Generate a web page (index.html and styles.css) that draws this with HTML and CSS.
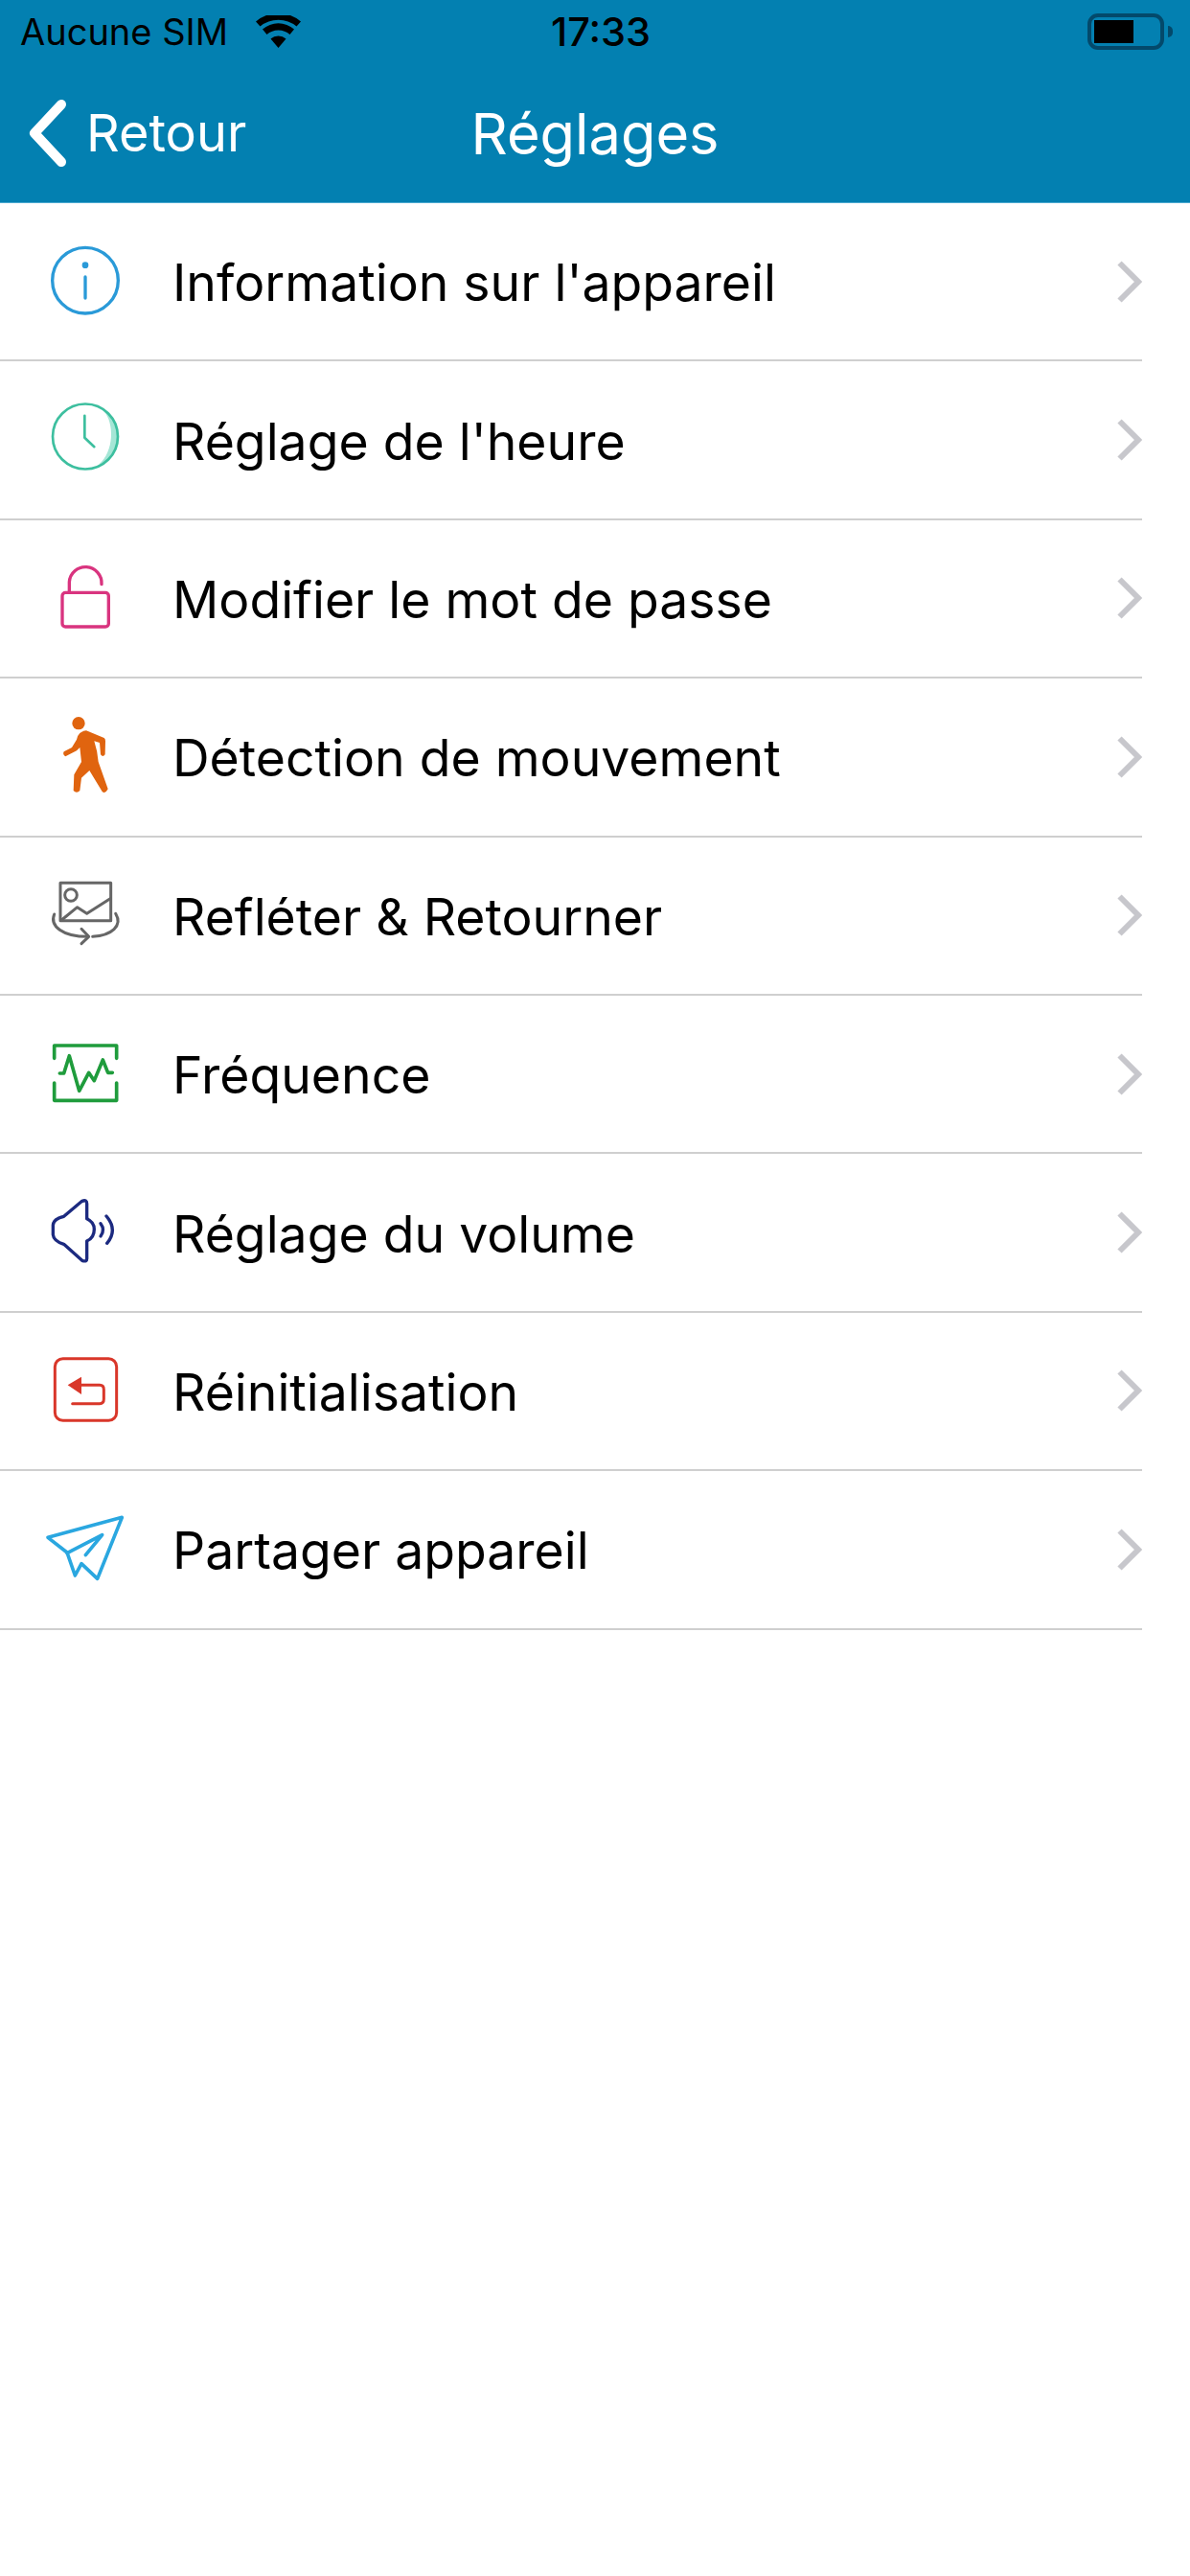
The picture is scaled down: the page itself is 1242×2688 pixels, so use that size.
FILE: index.html
```html
<!DOCTYPE html>
<html lang="fr">
<head>
    <meta charset="UTF-8">
    <meta name="viewport" content="width=device-width, initial-scale=1.0">
    <title>Réglages</title>
    <link rel="stylesheet" href="styles.css">
</head>
<body>

    <header class="top">
        <div class="status">
            <div class="status-left">
                <span>Aucune SIM</span>
                <svg class="wifi" viewBox="0 0 47 34">
                    <path d="M23.500 34 15.500 24.500a12 12 0 0 1 16 0Z"/>
                    <path d="M11.500 20 7 14.500a25 25 0 0 1 33 0L35.500 20a18 18 0 0 0-24 0Z"/>
                    <path d="M4.500 11.500 0 6.500a36 36 0 0 1 47 0L42.500 11.500a30 30 0 0 0-38 0Z"/>
                </svg>
            </div>
            <span class="clock">17:33</span>
            <div class="status-right">
                <div class="battery"><div class="battery-level"></div></div>
                <div class="battery-nub"></div>
            </div>
        </div>
        <nav class="nav">
            <div class="back">
                <svg class="back-icon" viewBox="0 0 40 70"><path d="M34 5 6 35l28 30"/></svg>
                <span>Retour</span>
            </div>
            <h1>Réglages</h1>
            <div></div>
        </nav>
    </header>

    <ul class="list">
        <li class="row">
            <svg class="icon" viewBox="42 27 270 270" fill="none" stroke="#2a9ad8" stroke-width="10" stroke-linecap="round">
                <circle cx="177" cy="158" r="103"/>
                <circle cx="177" cy="110" r="10" fill="#2a9ad8" stroke="none"/>
                <path d="M177 147v66"/>
            </svg>
            <span class="label">Information sur l'appareil</span>
            <svg class="chevron" viewBox="0 0 26 44"><path d="M2.500 2.500 22 22 2.500 41.500"/></svg>
        </li>
        <li class="row">
            <svg class="icon" viewBox="42 43.500 270 270" fill="none" stroke="#3dbf9f" stroke-width="8" stroke-linecap="round" stroke-linejoin="round">
                <path d="M235 88C268 125 268 215 220 255 262 245 279 205 279 168 279 130 262 103 235 88Z" fill="#a5e6d6" stroke="none"/>
                <circle cx="177" cy="168" r="102"/>
                <path d="M175 103v69l30 28"/>
            </svg>
            <span class="label">Réglage de l'heure</span>
            <svg class="chevron" viewBox="0 0 26 44"><path d="M2.500 2.500 22 22 2.500 41.500"/></svg>
        </li>
        <li class="row">
            <svg class="icon" viewBox="42 60 270 270" fill="none" stroke="#d9347f" stroke-width="10" stroke-linecap="round" stroke-linejoin="round">
                <rect x="105" y="178" width="145" height="107" rx="10"/>
                <path d="M127 178v-33a50 50 0 0 1 101 7"/>
            </svg>
            <span class="label">Modifier le mot de passe</span>
            <svg class="chevron" viewBox="0 0 26 44"><path d="M2.500 2.500 22 22 2.500 41.500"/></svg>
        </li>
        <li class="row">
            <svg class="icon" viewBox="42 45 270 270" fill="#e0640f">
                <circle cx="156" cy="74" r="20"/>
                <path d="M150 125Q155 100 180 97L236 120Q240 122 240 130L239 172Q232 182 225 172L222 135 205 130Q215 160 218 195L248 280Q240 296 230 288L190 222 165 245 160 285Q150 296 140 285L142 235 165 195 160 150 150 160 115 178Q105 172 110 163L135 150Z"/>
            </svg>
            <span class="label">Détection de mouvement</span>
            <svg class="chevron" viewBox="0 0 26 44"><path d="M2.500 2.500 22 22 2.500 41.500"/></svg>
        </li>
        <li class="row">
            <svg class="icon" viewBox="42 60 270 270" fill="none" stroke="#666" stroke-width="9" stroke-linecap="round" stroke-linejoin="round">
                <rect x="99" y="94" width="158" height="118"/>
                <circle cx="132" cy="132" r="19"/>
                <path d="M103 210 152 170 182 190 255 143"/>
                <path d="M80 192C65 228 105 262 185 262"/>
                <path d="M165 238 188 262 165 284"/>
                <path d="M272 190C295 228 260 258 200 262"/>
            </svg>
            <span class="label">Refléter &amp; Retourner</span>
            <svg class="chevron" viewBox="0 0 26 44"><path d="M2.500 2.500 22 22 2.500 41.500"/></svg>
        </li>
        <li class="row">
            <svg class="icon" viewBox="42 45 270 270" fill="none" stroke="#1f9c3c" stroke-width="11" stroke-linecap="round" stroke-linejoin="round">
                <path d="M80 130V90H275V130"/>
                <path d="M80 207V262H275V207"/>
                <path d="M97 177H110L127 122 158 232 188 175 205 200 232 135 248 175H262"/>
            </svg>
            <span class="label">Fréquence</span>
            <svg class="chevron" viewBox="0 0 26 44"><path d="M2.500 2.500 22 22 2.500 41.500"/></svg>
        </li>
        <li class="row">
            <svg class="icon" viewBox="42 63 270 270" fill="none" stroke="#1c2a80" stroke-width="10" stroke-linecap="round" stroke-linejoin="round">
                <path d="M167 100 110 148Q78 155 76 175V205Q78 225 110 235L167 286Q183 292 182 278V225Q205 215 205 188 205 165 182 155V108Q182 94 167 100Z"/>
                <path d="M225 170Q240 190 225 210"/>
                <path d="M243 147Q280 190 245 232"/>
            </svg>
            <span class="label">Réglage du volume</span>
            <svg class="chevron" viewBox="0 0 26 44"><path d="M2.500 2.500 22 22 2.500 41.500"/></svg>
        </li>
        <li class="row">
            <svg class="icon" viewBox="42 63 270 270" fill="none" stroke="#d9372a" stroke-width="9" stroke-linecap="round" stroke-linejoin="round">
                <rect x="82" y="98" width="193" height="194" rx="25"/>
                <path d="M122 181 165 155V210Z" fill="#d9372a" stroke="none"/>
                <path d="M165 181H222Q235 181 235 195V225Q235 239 222 239H137"/>
            </svg>
            <span class="label">Réinitialisation</span>
            <svg class="chevron" viewBox="0 0 26 44"><path d="M2.500 2.500 22 22 2.500 41.500"/></svg>
        </li>
        <li class="row">
            <svg class="icon" viewBox="42 66 270 270" fill="none" stroke="#2aa7e0" stroke-width="11" stroke-linecap="round" stroke-linejoin="round">
                <path d="M292 100 60 163 120 210 145 282 165 245 215 292Z"/>
                <path d="M120 212 230 155 178 218"/>
            </svg>
            <span class="label">Partager appareil</span>
            <svg class="chevron" viewBox="0 0 26 44"><path d="M2.500 2.500 22 22 2.500 41.500"/></svg>
        </li>
    </ul>

</body>
</html>
```

FILE: styles.css
```css
* {
    box-sizing: border-box;
}
body {
    margin: 0;
    background-color: white;
    font-family: Inter, Roboto, "Liberation Sans", sans-serif;
    color: black;
}
.top {
    height: 212px;
    background-color: #0380b1;
    border-bottom: 1px solid #4aa8d0;
}
.status {
    display: grid;
    grid-template-columns: 1fr auto 1fr;
    align-items: center;
    height: 66px;
    padding: 0 18px 0 21px;
    font-size: 38px;
}
.status-left {
    display: flex;
    align-items: center;
    gap: 29px;
}
.wifi {
    width: 47px;
    height: 34px;
}
.clock {
    margin-left: 9px;
    font-size: 41.5px;
    font-weight: 500;
}
.status-right {
    display: flex;
    align-items: center;
    justify-content: flex-end;
    gap: 4px;
}
.battery {
    width: 80px;
    height: 38px;
    padding: 3px;
    border: 4px solid #03496b;
    border-radius: 11px;
}
.battery-level {
    width: 41px;
    height: 100%;
    background-color: black;
}
.battery-nub {
    width: 5px;
    height: 12px;
    background-color: #03496b;
    border-radius: 0 6px 6px 0;
}
.nav {
    display: grid;
    grid-template-columns: 1fr auto 1fr;
    align-items: center;
    height: 145px;
    color: white;
    font-size: 54px;
}
.nav h1 {
    margin: 0;
    font-size: 59.500px;
    font-weight: 400;
}
.back {
    display: flex;
    align-items: center;
    gap: 20px;
    padding-left: 30px;
}
.back-icon {
    width: 40px;
    height: 70px;
    fill: none;
    stroke: white;
    stroke-width: 10;
    stroke-linecap: round;
    stroke-linejoin: round;
}
.list {
    width: 1192px;
    margin: 0;
    padding: 0;
    list-style: none;
}
.row {
    display: flex;
    align-items: center;
    height: 165.4px;
    padding-left: 44px;
    border-bottom: 2px solid #cfcfcf;
}
.icon {
    flex: none;
    width: 90px;
    height: 90px;
    margin-right: 46px;
}
.label {
    flex: 1;
    padding-top: 2px;
    font-size: 53.500px;
}
.chevron {
    flex: none;
    width: 26px;
    height: 44px;
    fill: none;
    stroke: #c7c7cc;
    stroke-width: 6;
}
```
